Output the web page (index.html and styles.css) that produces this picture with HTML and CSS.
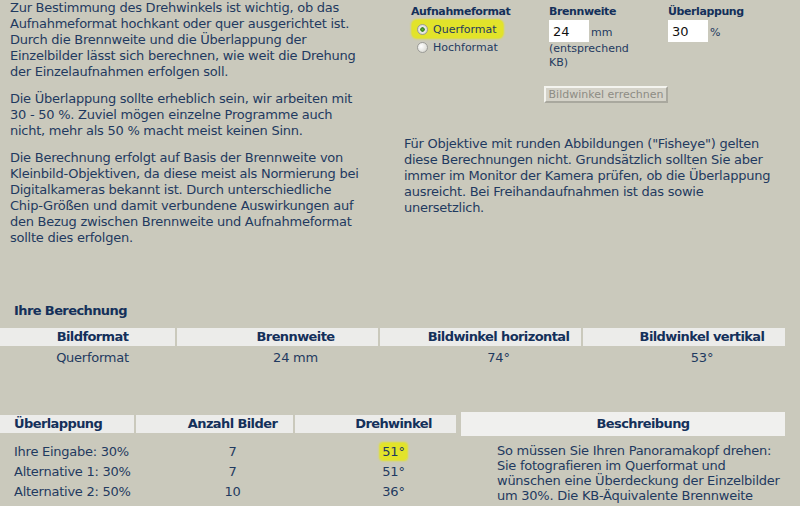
FILE: index.html
```html
<!DOCTYPE html>
<html lang="de">
<head>
  <meta charset="UTF-8">
  <meta name="viewport" content="width=device-width, initial-scale=1.0">
  <title>Panorama Drehwinkel</title>
  <link rel="stylesheet" href="styles.css">
</head>
<body>
  <div id="wrap">
    <div class="intro">
      <div class="introText">
        <p>Zur Bestimmung des Drehwinkels ist wichtig, ob das<br>Aufnahmeformat hochkant oder quer ausgerichtet ist.<br>Durch die Brennweite und die Überlappung der<br>Einzelbilder lässt sich berechnen, wie weit die Drehung<br>der Einzelaufnahmen erfolgen soll.</p>
        <p>Die Überlappung sollte erheblich sein, wir arbeiten mit<br>30 - 50 %. Zuviel mögen einzelne Programme auch<br>nicht, mehr als 50 % macht meist keinen Sinn.</p>
        <p>Die Berechnung erfolgt auf Basis der Brennweite von<br>Kleinbild-Objektiven, da diese meist als Normierung bei<br>Digitalkameras bekannt ist. Durch unterschiedliche<br>Chip-Größen und damit verbundene Auswirkungen auf<br>den Bezug zwischen Brennweite und Aufnahmeformat<br>sollte dies erfolgen.</p>
      </div>
      <div class="calc">
        <form class="calcForm">
          <div class="field">
            <span class="fieldLabel">Aufnahmeformat</span>
            <label class="choice marked"><input type="radio" name="format" checked>Querformat</label>
            <label class="choice"><input type="radio" name="format">Hochformat</label>
          </div>
          <div class="field">
            <span class="fieldLabel">Brennweite</span>
            <div class="fieldInput"><input type="text" value="24"><span class="unit">mm</span></div>
            <div class="hint">(entsprechend<br>KB)</div>
          </div>
          <div class="field">
            <span class="fieldLabel">Überlappung</span>
            <div class="fieldInput"><input type="text" value="30"><span class="unit">%</span></div>
          </div>
          <button type="button" class="calcBtn" disabled>Bildwinkel errechnen</button>
        </form>
        <p class="note">Für Objektive mit runden Abbildungen ("Fisheye") gelten<br>diese Berechnungen nicht. Grundsätzlich sollten Sie aber<br>immer im Monitor der Kamera prüfen, ob die Überlappung<br>ausreicht. Bei Freihandaufnahmen ist das sowie<br>unersetzlich.</p>
      </div>
    </div>

    <h3 class="resultTitle">Ihre Berechnung</h3>
    <table class="result">
      <colgroup>
        <col class="w175"><col class="w201"><col class="w201"><col class="w202">
      </colgroup>
      <thead>
        <tr><th class="first">Bildformat</th><th>Brennweite</th><th>Bildwinkel horizontal</th><th>Bildwinkel vertikal</th></tr>
      </thead>
      <tbody>
        <tr><td class="first">Querformat</td><td>24 mm</td><td>74°</td><td>53°</td></tr>
      </tbody>
    </table>

    <div class="turn">
      <table class="turnTable">
        <colgroup>
          <col class="w134"><col class="w157"><col class="w161">
        </colgroup>
        <thead>
          <tr><th class="left">Überlappung</th><th>Anzahl Bilder</th><th>Drehwinkel</th></tr>
        </thead>
        <tbody>
          <tr><td class="left">Ihre Eingabe: 30%</td><td>7</td><td><span class="mark">51°</span></td></tr>
          <tr><td class="left">Alternative 1: 30%</td><td>7</td><td>51°</td></tr>
          <tr><td class="left">Alternative 2: 50%</td><td>10</td><td>36°</td></tr>
        </tbody>
      </table>
      <div class="desc">
        <div class="descHead">Beschreibung</div>
        <p>So müssen Sie Ihren Panoramakopf drehen:<br>Sie fotografieren im Querformat und<br>wünschen eine Überdeckung der Einzelbilder<br>um 30%. Die KB-Äquivalente Brennweite</p>
      </div>
    </div>
  </div>
</body>
</html>
```

FILE: styles.css
```css
* { margin: 0; padding: 0; box-sizing: border-box; }
html, body {
  width: 100%;
  height: 100%;
  overflow: hidden;
}
body {
  background: #cac9bc;
  color: #1f3a60;
  font-family: "DejaVu Sans", Verdana, sans-serif;
  font-size: 13px;
  line-height: 16px;
  letter-spacing: -0.25px;
}
#wrap {
  width: 800px;
}

/* top: text left, form right */
.intro {
  display: flex;
}
.introText {
  width: 404px;
  padding-left: 10px;
  white-space: nowrap;
}
.introText p {
  margin-bottom: 11px;
}
.introText p:last-child {
  margin-bottom: 0;
}
.calc {
  flex: 1;
}
.calcForm {
  display: grid;
  grid-template-columns: 138px 119px 1fr;
  padding: 5px 0 0 7px;
  font-size: 11px;
  line-height: 13px;
  letter-spacing: 0;
}
.field {
  display: flex;
  flex-direction: column;
  align-items: flex-start;
}
.fieldLabel {
  font-weight: bold;
  color: #14305a;
  margin-bottom: 1px;
  letter-spacing: -0.4px;
}
.choice {
  display: flex;
  align-items: center;
  height: 18px;
  padding: 0 6px 0 5px;
  margin-left: 1px;
}
.choice.marked {
  margin-top: 1px;
  background: #e2e32a;
  border-radius: 5px;
  box-shadow: 0 0 2px 1px #e2e32a;
}
.choice input {
  appearance: none;
  width: 11px;
  height: 11px;
  border-radius: 50%;
  border: 1px solid #9c9c98;
  background: radial-gradient(circle at 35% 35%, #ffffff 0, #e4e4df 60%, #c9c9c2 100%);
  margin-right: 5px;
}
.choice input:checked {
  background: radial-gradient(circle, #6bb33a 0, #2f7d16 30%, #ecece6 40%, #d2d2cb 100%);
}
.fieldInput {
  display: flex;
  align-items: center;
  margin-top: 1px;
}
.fieldInput input {
  width: 40px;
  height: 22px;
  border: none;
  background: #fff;
  padding: 0 4px;
  font-family: inherit;
  font-size: 13px;
  color: #111;
  outline: none;
}
.unit {
  margin-left: 2px;
  padding-top: 3px;
}
.hint {
  line-height: 14px;
}
.calcBtn {
  grid-column: 2 / 4;
  justify-self: start;
  margin: 16px 0 0 -5px;
  width: 124px;
  height: 17px;
  background: #d4d2c8;
  border: 2px solid;
  border-color: #f4f4ef #a9a89e #a9a89e #f4f4ef;
  color: #8d8c84;
  font-family: inherit;
  font-size: 11px;
  line-height: 11px;
}
.note {
  margin-top: 33px;
  white-space: nowrap;
}

/* result tables */
.resultTitle {
  margin-top: 57px;
  padding-left: 14px;
  font-size: 13px;
  line-height: 16px;
  color: #14305a;
  letter-spacing: -0.6px;
}
table {
  border-collapse: separate;
  border-spacing: 2px 0;
  table-layout: fixed;
  margin-left: -2px;
}
th {
  background: #ececea;
  color: #14305a;
  font-weight: bold;
  height: 18px;
  line-height: 18px;
  text-align: center;
  padding-left: 36px;
  white-space: nowrap;
  letter-spacing: -0.6px;
}
td {
  text-align: center;
  padding-left: 36px;
  white-space: nowrap;
}
.result {
  margin-top: 9px;
  width: 789px;
}
.result th.first,
.result td.first {
  padding-left: 10px;
}
.result td {
  height: 24px;
}
.w175 { width: 175px; }
.w201 { width: 201px; }
.w202 { width: 202px; }
.w134 { width: 134px; }
.w157 { width: 157px; }
.w161 { width: 161px; }

.turn {
  display: flex;
  align-items: flex-start;
  margin-top: 42px;
}
.turnTable {
  width: 460px;
  margin-top: 3px;
}
.turnTable th.left,
.turnTable td.left {
  text-align: left;
  padding-left: 14px;
}
.turnTable td {
  line-height: 20px;
}
.turnTable tbody tr:first-child td {
  padding-top: 9px;
}
.mark {
  background: #e2e32a;
  padding: 1px 2px;
  border-radius: 3px;
  box-shadow: 0 0 2px 1px #e2e32a;
}
.desc {
  width: 324px;
  margin-left: 3px;
}
.descHead {
  background: #f0f0ee;
  color: #14305a;
  font-weight: bold;
  height: 24px;
  line-height: 24px;
  text-align: center;
  padding-left: 40px;
  letter-spacing: -0.6px;
}
.desc p {
  margin-top: 7px;
  padding-left: 36px;
  line-height: 15px;
  white-space: nowrap;
}
```
